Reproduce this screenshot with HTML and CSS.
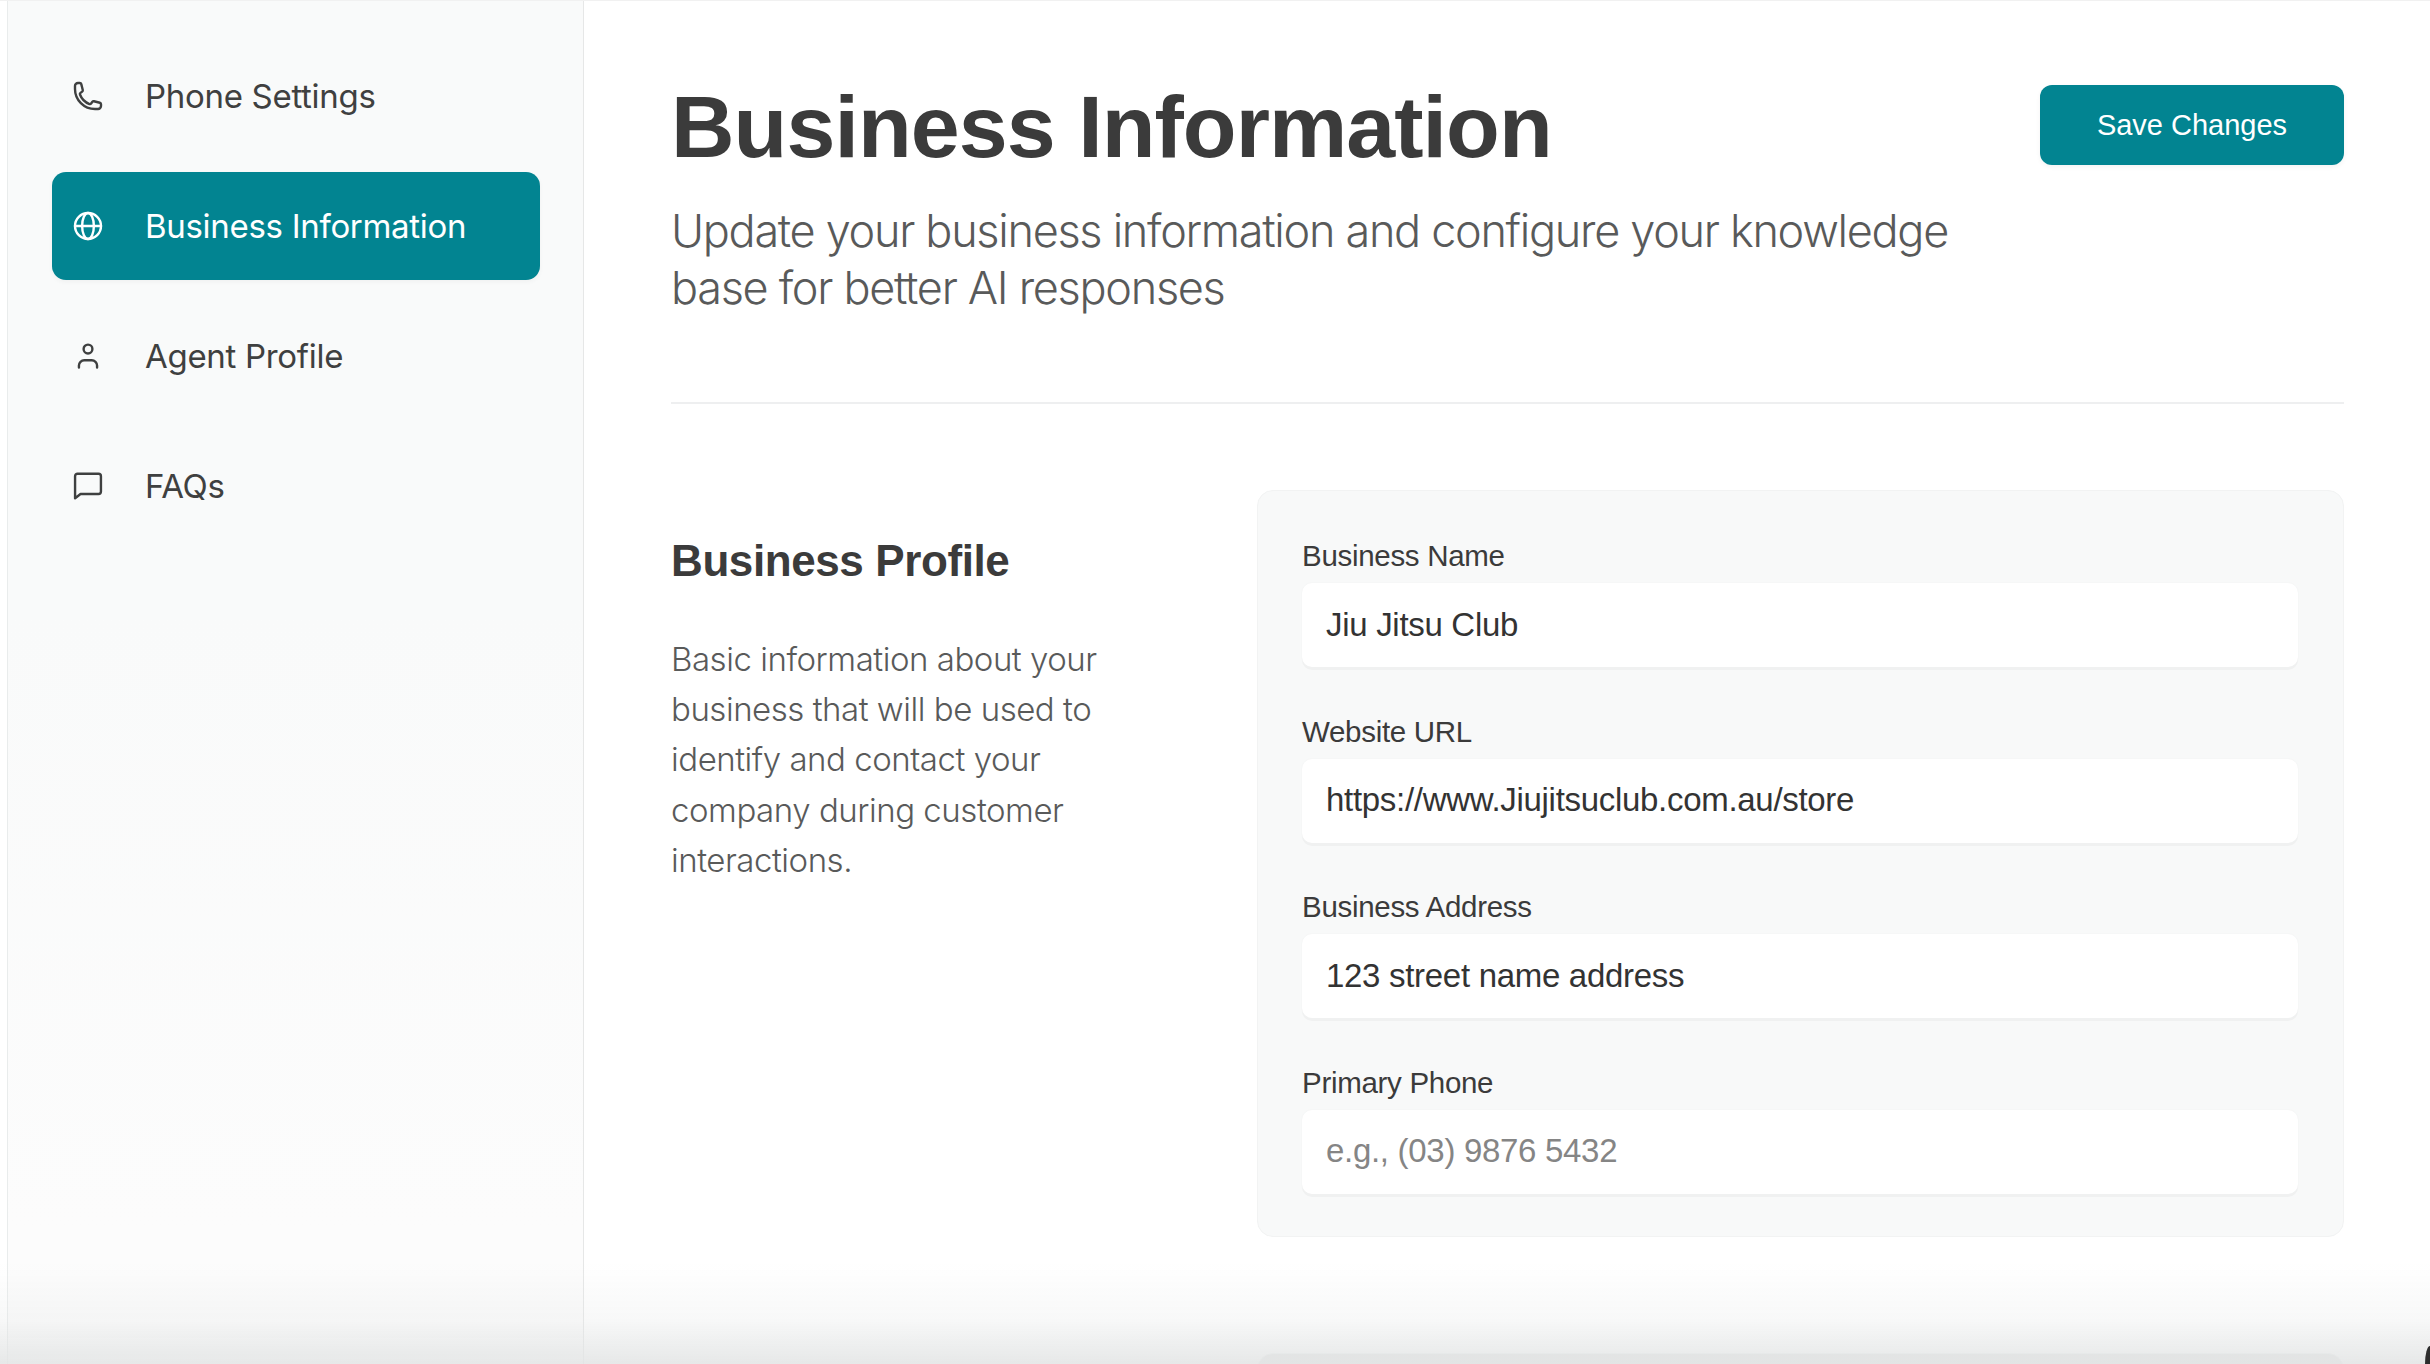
FILE: index.html
```html
<!DOCTYPE html>
<html lang="en">
<head>
  <meta charset="UTF-8">
  <title>Business Information</title>
  <link rel="stylesheet" href="styles.css">
</head>
<body>
  <div class="app">
    <nav class="sidebar">
      <a class="nav-item" href="#">
        <svg class="nav-icon" viewBox="0 0 24 24"><path d="M2.25 6.75c0 8.284 6.716 15 15 15h2.25a2.25 2.25 0 002.25-2.25v-1.372c0-.516-.351-.966-.852-1.091l-4.423-1.106c-.44-.11-.902.055-1.173.417l-.97 1.293c-.282.376-.769.542-1.21.38a12.035 12.035 0 01-7.143-7.143c-.162-.441.004-.928.38-1.21l1.293-.97c.363-.271.527-.734.417-1.173L6.963 3.102a1.125 1.125 0 00-1.091-.852H4.5A2.25 2.25 0 002.25 4.5v2.25z"/></svg>
        <span>Phone Settings</span>
      </a>
      <a class="nav-item active" href="#">
        <svg class="nav-icon" viewBox="0 0 24 24"><circle cx="12" cy="12" r="9.75"/><ellipse cx="12" cy="12" rx="4.4" ry="9.75"/><path d="M2.25 12h19.5"/></svg>
        <span>Business Information</span>
      </a>
      <a class="nav-item" href="#">
        <svg class="nav-icon" viewBox="0 0 24 24"><circle cx="12" cy="6.8" r="3.3"/><path d="M5.2 20.6v-1.4a4 4 0 014-4h5.6a4 4 0 014 4v1.4"/></svg>
        <span>Agent Profile</span>
      </a>
      <a class="nav-item" href="#">
        <svg class="nav-icon" viewBox="0 0 24 24"><path d="M2.3 21.2V4.6a1.8 1.8 0 011.8-1.8h15.8a1.8 1.8 0 011.8 1.8v11.6a1.8 1.8 0 01-1.8 1.8H6.4z"/></svg>
        <span>FAQs</span>
      </a>
    </nav>

    <main class="content">
      <header class="page-header">
        <div class="page-heading">
          <h1>Business Information</h1>
          <p class="subtitle">Update your business information and configure your knowledge base for better AI responses</p>
        </div>
        <button class="save-btn" type="button">Save Changes</button>
      </header>

      <section class="section">
        <div class="section-intro">
          <h2>Business Profile</h2>
          <p>Basic information about your business that will be used to identify and contact your company during customer interactions.</p>
        </div>
        <form class="card">
          <div class="form-group">
            <label for="business-name">Business Name</label>
            <input type="text" id="business-name" value="Jiu Jitsu Club">
          </div>
          <div class="form-group">
            <label for="website-url">Website URL</label>
            <input type="text" id="website-url" value="https://www.Jiujitsuclub.com.au/store">
          </div>
          <div class="form-group">
            <label for="business-address">Business Address</label>
            <input type="text" id="business-address" value="123 street name address">
          </div>
          <div class="form-group">
            <label for="primary-phone">Primary Phone</label>
            <input type="text" id="primary-phone" placeholder="e.g., (03) 9876 5432">
          </div>
        </form>
      </section>

      <div class="card card-next"></div>
    </main>
  </div>
  <div class="bottom-fade"></div>
  <div class="window-corner"></div>
</body>
</html>
```

FILE: styles.css
```css
/* General Styles */
html, body {
  height: 100%;
}

body {
  margin: 0;
  background: #fff;
  color: #3b3b3b;
  font-family: "Liberation Sans", Arial, sans-serif;
  overflow: hidden;
}

.app {
  display: flex;
  height: 1364px;
  padding-left: 7px;
  box-sizing: border-box;
  border-top: 1px solid #f1f1f1;
  background: #fff;
  overflow: hidden;
}

/* Sidebar */
.sidebar {
  flex: 0 0 577px;
  box-sizing: border-box;
  padding: 41px 43px 0 44px;
  background: linear-gradient(to bottom, #f9fafa 45%, #fcfcfc 90%);
  border-left: 1px solid #e9ecec;
  border-right: 1px solid #e6e7e7;
  display: flex;
  flex-direction: column;
  gap: 22px;
}

.nav-item {
  display: flex;
  align-items: center;
  gap: 41px;
  height: 108px;
  padding-left: 20px;
  border-radius: 14px;
  color: #3f4040;
  font-family: Inter, "Noto Sans", sans-serif;
  font-size: 33px;
  letter-spacing: -0.3px;
  text-decoration: none;
}

.nav-item.active {
  background: #028491;
  color: #fff;
  box-shadow: 0 2px 5px rgba(0, 0, 0, 0.04);
}

.nav-icon {
  flex: none;
  width: 32px;
  height: 32px;
  fill: none;
  stroke: currentColor;
  stroke-width: 1.8;
  stroke-linecap: round;
  stroke-linejoin: round;
}

/* Main content */
.content {
  flex: 1;
  min-width: 0;
  padding: 76px 86px 0 87px;
}

.page-header {
  display: flex;
  justify-content: space-between;
  align-items: flex-start;
  padding-bottom: 86px;
  border-bottom: 2px solid #eeeff0;
}

.page-heading {
  width: 1300px;
}

h1 {
  margin: 0 0 25px;
  font-size: 88px;
  line-height: 100px;
  font-weight: 700;
  letter-spacing: -0.95px;
  color: #3b3b3b;
}

.subtitle {
  margin: 0;
  font-family: Inter, "Noto Sans", sans-serif;
  font-size: 45px;
  line-height: 57px;
  font-weight: 300;
  letter-spacing: -1.3px;
  color: #595a5a;
}

.save-btn {
  flex: none;
  width: 304px;
  height: 80px;
  margin-top: 8px;
  border: none;
  border-radius: 12px;
  background: #028491;
  color: #fff;
  font-family: "Liberation Sans", Arial, sans-serif;
  font-size: 29px;
  box-shadow: 0 2px 5px rgba(0, 0, 0, 0.05);
}

.section {
  display: flex;
  gap: 116px;
  margin-top: 86px;
}

.section-intro {
  flex: 0 0 470px;
  padding-top: 41px;
}

h2 {
  margin: 0 0 43px;
  font-size: 44px;
  line-height: 60px;
  font-weight: 700;
  letter-spacing: -0.4px;
  color: #3b3b3b;
}

.section-intro p {
  margin: 0;
  font-family: Inter, "Noto Sans", sans-serif;
  font-size: 33px;
  line-height: 50.2px;
  font-weight: 300;
  letter-spacing: -0.47px;
  color: #595a5a;
}

/* Form card */
.card {
  flex: 1;
  box-sizing: border-box;
  padding: 47px 45px 42px 44px;
  background: #f8f9f9;
  border: 1px solid #f2f3f3;
  border-radius: 16px;
}

.form-group {
  margin-bottom: 46.6px;
}

.form-group:last-child {
  margin-bottom: 0;
}

label {
  display: block;
  margin-bottom: 9px;
  font-size: 29.5px;
  line-height: 36px;
  letter-spacing: -0.3px;
  color: #3b3b3b;
}

input {
  display: block;
  width: 100%;
  height: 84px;
  box-sizing: border-box;
  padding: 0 24px 1px;
  border: none;
  border-radius: 10px;
  background: #fff;
  color: #333;
  font-family: "Liberation Sans", Arial, sans-serif;
  font-size: 33px;
  letter-spacing: -0.3px;
  box-shadow: 0 3px 0 #f0f1f1, 0 0 2px #f0f1f1;
  outline: none;
}

input::placeholder {
  color: #858585;
  opacity: 1;
}

.card-next {
  height: 300px;
  margin: 116px 0 0 586px;
  background: #e4e5e5;
}

/* Soft shade along the bottom of the window */
.bottom-fade {
  position: fixed;
  left: 0;
  right: 0;
  bottom: 0;
  height: 100px;
  background: linear-gradient(to bottom, rgba(226, 228, 228, 0), rgba(226, 228, 228, 0.25) 55%, rgba(226, 228, 228, 0.85));
  pointer-events: none;
}

.window-corner {
  position: fixed;
  right: 0;
  bottom: 0;
  width: 5px;
  height: 18px;
  background: #2d2d2d;
  border-top-left-radius: 5px 18px;
}
```
